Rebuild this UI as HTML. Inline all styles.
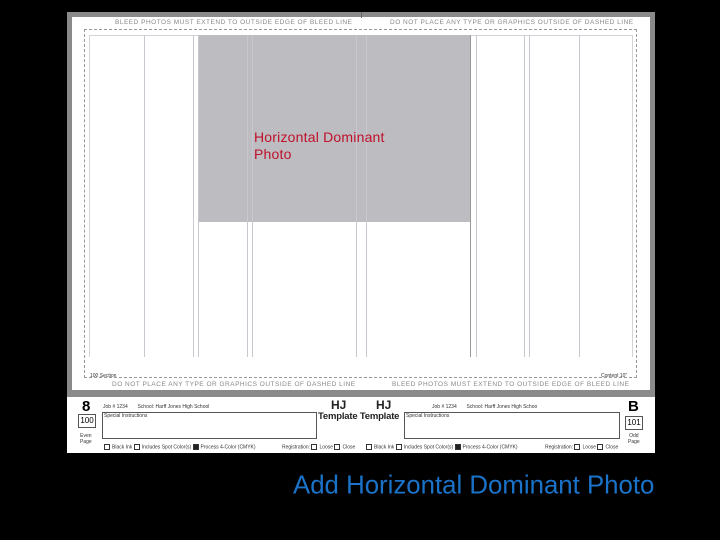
<!DOCTYPE html>
<html><head><style>
*{margin:0;padding:0;box-sizing:border-box}
body{width:720px;height:540px;background:#000;position:relative;overflow:hidden;font-family:"Liberation Sans",sans-serif}
.a{position:absolute}
.v{position:absolute;width:1px;background:#c8c8d0;top:35px;height:322px}
.t{position:absolute;font-size:6.5px;color:#888;letter-spacing:.5px;white-space:nowrap}
.s{position:absolute;font-size:5px;color:#333;white-space:nowrap}
.cb{display:inline-block;width:6px;height:6px;border:1px solid #333;vertical-align:middle;margin-right:2px}
</style></head><body>
<div class="a" style="left:67px;top:12px;width:588px;height:385px;background:#8a8a8a"></div>
<div class="a" style="left:72px;top:17px;width:578px;height:373px;background:#fff"></div>
<div class="a" style="left:67px;top:397px;width:588px;height:56px;background:#fff"></div>
<div class="a" style="left:84px;top:29px;width:553px;height:349px;border:1px dashed #999"></div>
<div class="a" style="left:89px;top:35px;width:544px;height:322px;border:1px solid #d4d4d8;border-bottom:none"></div>
<div class="a" style="left:198px;top:35px;width:272px;height:187px;background:#bdbdc1"></div>
<div class="v" style="left:144px"></div><div class="v" style="left:193px"></div><div class="v" style="left:198px"></div>
<div class="v" style="left:247px"></div><div class="v" style="left:252px"></div><div class="v" style="left:356px"></div>
<div class="v" style="left:366px"></div><div class="v" style="left:470px;background:#999"></div><div class="v" style="left:476px"></div>
<div class="v" style="left:524px"></div><div class="v" style="left:529px"></div><div class="v" style="left:579px"></div>
<div class="a" style="left:361px;top:12px;width:1px;height:6px;background:#666"></div>
<div class="t" style="left:115px;top:19px">BLEED PHOTOS MUST EXTEND TO OUTSIDE EDGE OF BLEED LINE</div>
<div class="t" style="left:390px;top:19px">DO NOT PLACE ANY TYPE OR GRAPHICS OUTSIDE OF DASHED LINE</div>
<div class="t" style="left:112px;top:381px">DO NOT PLACE ANY TYPE OR GRAPHICS OUTSIDE OF DASHED LINE</div>
<div class="t" style="left:392px;top:381px">BLEED PHOTOS MUST EXTEND TO OUTSIDE EDGE OF BLEED LINE</div>
<div class="s" style="left:90px;top:373px">100 Section</div>
<div class="s" style="left:601px;top:373px">Content 10"</div>
<div class="a" style="left:254px;top:129px;color:#c0102a;font-size:14px;line-height:17px;letter-spacing:.2px">Horizontal Dominant<br>Photo</div>
<!-- bottom strip -->
<div class="a" style="left:82px;top:398px;font-size:15px;font-weight:bold">8</div>
<div class="a" style="left:628px;top:398px;font-size:15px;font-weight:bold">B</div>
<div class="a" style="left:78px;top:414px;width:18px;height:14px;border:1px solid #555;font-size:8px;text-align:center;line-height:12px">100</div>
<div class="a" style="left:625px;top:416px;width:18px;height:14px;border:1px solid #555;font-size:8px;text-align:center;line-height:12px">101</div>
<div class="s" style="left:80px;top:433px;text-align:center">Even<br>Page</div>
<div class="s" style="left:628px;top:433px;text-align:center">Odd<br>Page</div>
<div class="s" style="left:103px;top:404px">Job # 1234 &nbsp;&nbsp;&nbsp;&nbsp;&nbsp; School: Harff Jones High School</div>
<div class="s" style="left:432px;top:404px">Job # 1234 &nbsp;&nbsp;&nbsp;&nbsp;&nbsp; School: Harff Jones High Schoo</div>
<div class="a" style="left:102px;top:412px;width:215px;height:27px;border:1px solid #555"></div>
<div class="a" style="left:404px;top:412px;width:216px;height:27px;border:1px solid #555"></div>
<div class="s" style="left:104px;top:413px">Special Instructions</div>
<div class="s" style="left:406px;top:413px">Special Instructions</div>
<div class="a" style="left:331px;top:398px;font-size:12px;font-weight:bold;color:#222">HJ</div>
<div class="a" style="left:376px;top:398px;font-size:12px;font-weight:bold;color:#222">HJ</div>
<div class="a" style="left:318px;top:411px;font-size:9.5px;font-weight:bold;color:#222;letter-spacing:-.2px">Template Template</div>
<div class="s" style="left:104px;top:444px"><span class="cb"></span>Black Ink <span class="cb"></span>Includes Spot Color(s) <span class="cb" style="background:#222"></span>Process 4-Color (CMYK)</div>
<div class="s" style="left:282px;top:444px">Registration: <span class="cb"></span>Loose <span class="cb"></span>Close</div>
<div class="s" style="left:366px;top:444px"><span class="cb"></span>Black Ink <span class="cb"></span>Includes Spot Color(s) <span class="cb" style="background:#222"></span>Process 4-Color (CMYK)</div>
<div class="s" style="left:545px;top:444px">Registration: <span class="cb"></span>Loose <span class="cb"></span>Close</div>
<div class="a" style="left:293px;top:467px;color:#1a73c8;font-size:21.5px;line-height:30px;transform:scale(1.2);transform-origin:left top;white-space:nowrap">Add Horizontal Dominant Photo</div>
</body></html>
